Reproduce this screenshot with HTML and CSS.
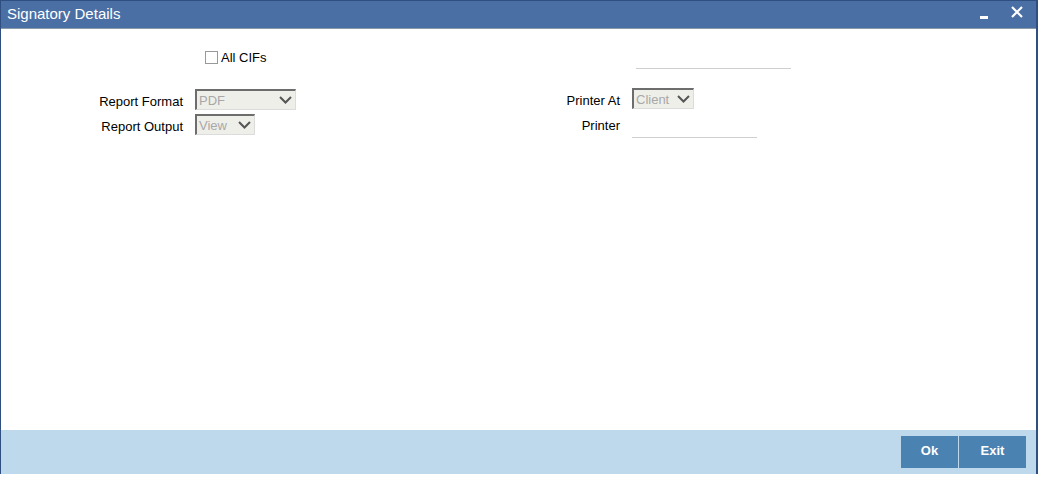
FILE: index.html
```html
<!DOCTYPE html>
<html>
<head>
<meta charset="utf-8">
<link rel="stylesheet" href="styles.css">
</head>
<body>
<div class="window">
  <div class="titlebar">
    <span class="title">Signatory Details</span>
    <div class="controls">
      <span class="minimize"></span>
      <svg class="close" width="12" height="12" viewBox="0 0 12 12"><path d="M1 1 L11 11 M11 1 L1 11" stroke="#fff" stroke-width="2.2" fill="none"/></svg>
    </div>
  </div>
  <div class="content">
    <div class="col left">
      <div class="check-row">
        <span class="checkbox"></span><span class="check-label">All CIFs</span>
      </div>
      <div class="field">
        <span class="label">Report Format</span>
        <span class="select w-pdf"><span class="val">PDF</span><svg class="chev" width="13" height="8" viewBox="0 0 13 8"><path d="M1 1 L6.5 6.5 L12 1" stroke="#555" stroke-width="2" fill="none"/></svg></span>
      </div>
      <div class="field">
        <span class="label">Report Output</span>
        <span class="select w-view"><span class="val">View</span><svg class="chev" width="13" height="8" viewBox="0 0 13 8"><path d="M1 1 L6.5 6.5 L12 1" stroke="#555" stroke-width="2" fill="none"/></svg></span>
      </div>
    </div>
    <div class="col right">
      <div class="top-input-row"><span class="line-input top-input"></span></div>
      <div class="field">
        <span class="label r">Printer At</span>
        <span class="select w-client"><span class="val">Client</span><svg class="chev" width="13" height="8" viewBox="0 0 13 8"><path d="M1 1 L6.5 6.5 L12 1" stroke="#555" stroke-width="2" fill="none"/></svg></span>
      </div>
      <div class="field">
        <span class="label r">Printer</span>
        <span class="line-input printer-input"></span>
      </div>
    </div>
  </div>
  <div class="footer">
    <button class="btn ok">Ok</button>
    <button class="btn exit">Exit</button>
  </div>
</div>
</body>
</html>
```
FILE: styles.css
```css
html, body {
  margin: 0;
  padding: 0;
  background: #fff;
}
body {
  width: 1038px;
  height: 483px;
  overflow: hidden;
  font-family: "Liberation Sans", Arial, sans-serif;
  font-size: 13px;
  color: #000;
}
.window {
  box-sizing: border-box;
  width: 1038px;
  height: 474px;
  border-left: 1px solid #2e4f7f;
  border-right: 2px solid #2e4f7f;
  border-top: 1px solid #2e4f7f;
  display: flex;
  flex-direction: column;
}
.titlebar {
  height: 27px;
  background: #4a6fa5;
  border-bottom: 1px solid #8a9aa8;
  display: flex;
  align-items: center;
  justify-content: space-between;
  color: #fff;
}
.title {
  font-size: 15px;
  padding-left: 6px;
  padding-bottom: 3px;
}
.controls {
  display: flex;
  align-items: center;
  gap: 23px;
  padding-right: 13px;
  padding-bottom: 6px;
}
.minimize {
  width: 8px;
  height: 3px;
  background: #fff;
  margin-top: 12px;
}
.close { display: block; }
.content {
  flex: 1;
  display: flex;
}
.col {
  display: flex;
  flex-direction: column;
}
.left { width: 539px; }
.check-row {
  display: flex;
  align-items: center;
  height: 14px;
  margin-top: 21px;
  margin-left: 204px;
  margin-bottom: 25px;
}
.checkbox {
  box-sizing: border-box;
  width: 13px;
  height: 13px;
  border: 1px solid #999;
  background: #fff;
  margin-right: 3px;
}
.check-label { font-size: 13px; }
.field {
  display: flex;
  align-items: center;
  height: 21px;
  margin-bottom: 4px;
}
.label {
  width: 182px;
  text-align: right;
  margin-right: 12px;
  padding-top: 3px;
  color: #000;
  font-size: 13px;
}
.label.r { width: 80px; }
.select {
  box-sizing: border-box;
  height: 21px;
  background: #efefea;
  border-top: 2px solid #6d6d6d;
  border-left: 2px solid #6d6d6d;
  border-right: 1px solid #dcdcdc;
  border-bottom: 1px solid #dcdcdc;
  display: flex;
  align-items: center;
  justify-content: space-between;
  padding: 0 3px 0 2px;
  color: #a8a8a8;
  font-size: 13px;
}
.w-pdf { width: 101px; }
.w-view { width: 60px; }
.w-client { width: 62px; }
.chev { display: block; }
.top-input-row {
  height: 39px;
  margin-top: 20px;
  margin-left: 96px;
  display: flex;
  align-items: flex-start;
}
.line-input {
  box-sizing: border-box;
  display: block;
  border-bottom: 1px solid #cfcfcf;
}
.top-input {
  width: 155px;
  height: 20px;
}
.printer-input {
  width: 125px;
  height: 23px;
  margin-top: 5px;
}
.footer {
  height: 44px;
  background: #bed9ec;
  display: flex;
  align-items: center;
  justify-content: flex-end;
  padding-right: 10px;
  gap: 1px;
}
.btn {
  border: none;
  background: #4a82b2;
  color: #fff;
  font-family: "Liberation Sans", Arial, sans-serif;
  font-size: 13px;
  font-weight: bold;
  height: 32px;
  padding: 0 0 3px 0;
  margin-top: 0;
}
.ok { width: 57px; }
.exit { width: 67px; }
```
